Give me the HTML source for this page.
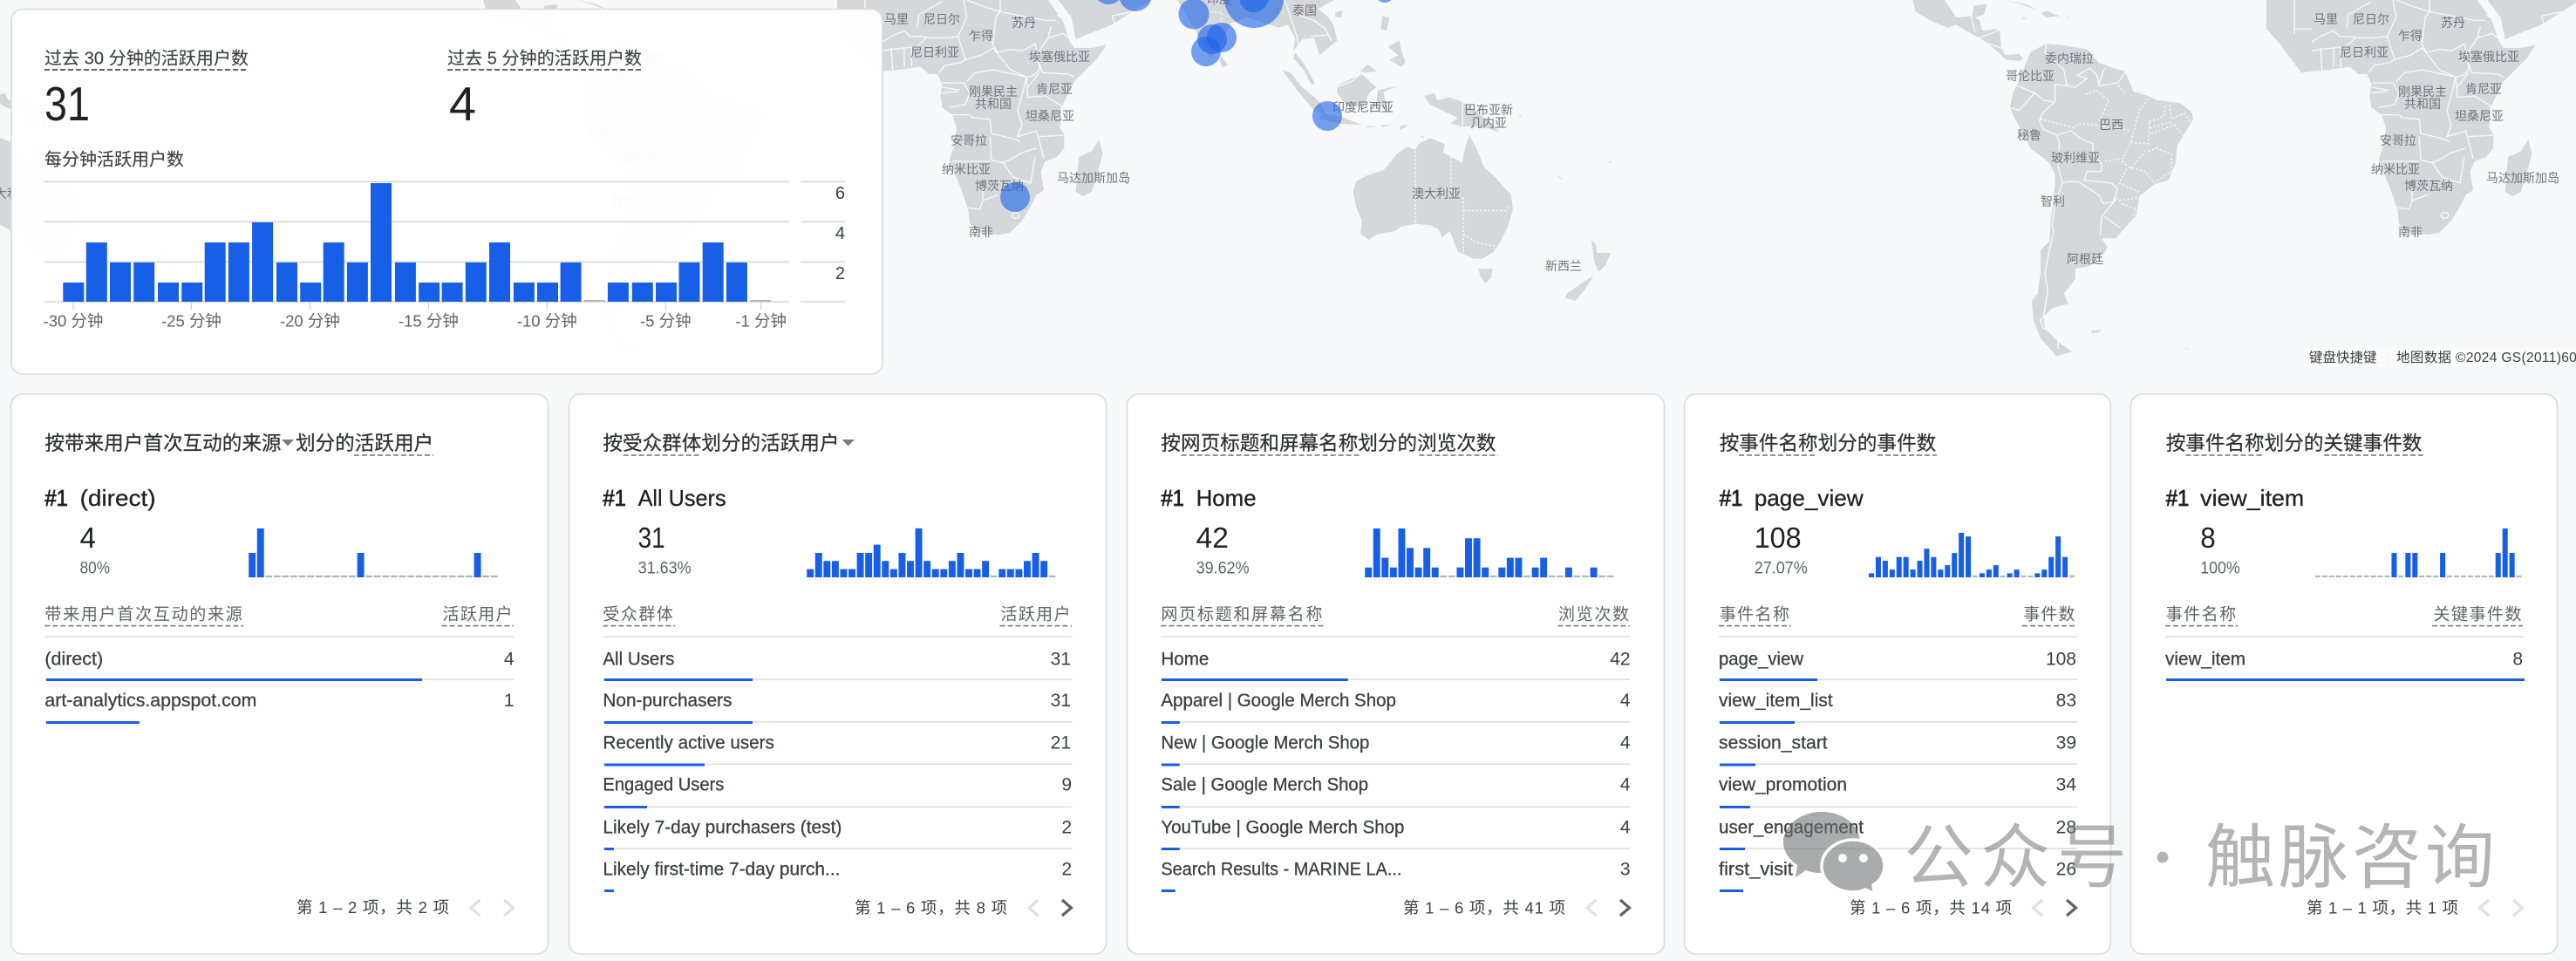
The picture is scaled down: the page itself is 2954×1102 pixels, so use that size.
<!DOCTYPE html>
<html lang="zh"><head><meta charset="utf-8"><title>实时概览</title>
<style>
html,body{margin:0;padding:0;background:#f7f8fa;width:2954px;height:1102px;overflow:hidden}
svg{display:block}
text{font-family:"Liberation Sans","Noto Sans CJK SC",sans-serif}
.m{font-size:14px;fill:#70747a;text-anchor:middle}
.f{font-size:15.5px;fill:#3c4043}
.tt{font-size:20px;fill:#3c4043;stroke:#3c4043;stroke-width:.15px}
.ax{font-size:18.5px;fill:#5f6368;text-anchor:middle}
.y{font-size:20px;fill:#3c4043;text-anchor:end}
.t{font-size:22.6px;fill:#303134;stroke:#303134;stroke-width:.25px}
.a{font-size:26px;fill:#202124;stroke:#202124;stroke-width:.3px}
.a1{stroke-width:.8px}
.b{font-size:33px;fill:#202124}
.p{font-size:19.5px;fill:#5f6368}
.h{font-size:19px;fill:#5f6368}
.he{font-size:19px;fill:#5f6368;text-anchor:end}
.r{font-size:21px;fill:#3c4043;stroke:#3c4043;stroke-width:.3px}
.n{font-size:21px;fill:#3c4043;text-anchor:end}
.g{font-size:18.5px;fill:#3c4043}
.wm{font-size:80px;fill:#777;opacity:.55}
.land{fill:#d5d7db}
.bd{fill:none;stroke:#f7f8fa;stroke-width:4;stroke-linejoin:round}
.dt{fill:none;stroke:#f7f8fa;stroke-width:4.5;stroke-dasharray:7 7}
.d{stroke:#80868b;stroke-width:1.7;stroke-dasharray:6 3;fill:none}
.l{stroke:#dadce0;stroke-width:1.5;fill:none}
.u{fill:#185fe8}
.z{stroke:#b4b7bb;stroke-width:2.2;fill:none}
.c0{fill:none;stroke:#dfe1e4;stroke-width:3.2}
.c1{fill:none;stroke:#5f6368;stroke-width:3.2}
.card{fill:#fff;stroke:#d9dbe0;stroke-width:1.6}
</style></head>
<body>
<svg xmlns="http://www.w3.org/2000/svg" width="2954" height="1102" viewBox="0 0 2954 1102">
<defs>
<g id="w">
<g transform="translate(1012 0) scale(.3333)">
<path class="land" d="M-156 0L-156 99L-111 150L-36 250L0 245L60 240L130 230L160 255L190 255L205 290L200 330L205 370L240 395L255 440L250 490L230 550L250 600L270 650L295 720L300 770L330 800L400 808L440 800L480 760L510 710L530 670L555 655L545 590L560 555L600 540L625 510L625 460L610 440L615 400L610 380L640 320L660 280L700 240L740 200L770 155L720 165L660 165L645 145L640 130L620 70L580 15L570 0Z"/>
<path class="land" d="M605 0L650 60L665 135L700 120L790 85L860 40L925 0Z"/>
<path class="land" d="M745 480L755 520L758 530L735 610L720 660L690 675L665 660L670 600L675 540L720 520Z"/>
<path class="bd" d="M0 145L30 125L75 105L95 125L130 125L160 130L220 130L260 125L290 60L280 0M120 95L125 50L205 5M260 125L285 205L270 215L215 225L195 250M375 145L395 180L440 170L480 175L510 160L525 150L535 190L540 240L520 260L495 265M285 205L340 190L380 165L400 190L440 240L495 265M380 150L390 60L405 40L405 0M290 0L340 20L405 40L560 70L595 70M580 90L570 130L530 190L550 250L640 255L660 265M290 280L320 250L380 240L495 265L485 310L465 380L480 430L465 470L530 450M240 395L300 395L310 405L370 410L375 460L400 465L460 480L475 490M370 470L375 550L410 560L440 550L480 525L530 510M240 555L370 555M415 560L450 610L510 630L525 540M345 630L345 690L400 670M295 715L335 720L345 690M540 470L625 465M530 450L555 545M495 265L500 335L560 330L625 370M540 250L500 300M230 370L285 360L300 320L280 285L205 285M205 300L265 310M205 320L260 315M30 165L35 240M75 165L75 230M100 165L100 230M0 175L30 170L120 160L150 130M-60 0L-60 120M-60 100L0 100M570 130L620 115L640 130M600 50L655 90M790 55L800 85M860 40L790 55"/>
<ellipse class="bd" cx="458" cy="741" rx="13" ry="10"/>
</g>
<g transform="translate(1330 0) scale(.3333)">
<path class="land" d="M60 0L120 100L175 200L210 150L245 80L300 60L410 95L440 85L465 130L460 175L490 135L530 130L550 190L610 140L600 90L580 60L545 30L600 0Z"/>
<path class="land" d="M210 190L235 225L215 232L208 210Z"/>
<path class="land" d="M465 180L500 225L535 290L520 290L495 240L460 200Z"/>
<path class="land" d="M420 240L450 250L490 300L550 350L575 400L530 380L480 320Z"/>
<path class="land" d="M555 390L620 400L695 430L620 425L550 410Z"/>
<path class="land" d="M610 295L660 270L695 255L745 300L720 320L700 370L640 360L610 320Z"/>
<path class="land" d="M690 245L715 220L745 245L710 250Z"/>
<path class="land" d="M750 310L825 295L770 315L775 350L790 385L745 355Z"/>
<path class="land" d="M765 55L790 60L780 105L760 100Z"/>
<path class="land" d="M790 205L820 190L785 160L825 140L830 170L845 215L830 230Z"/>
<path class="land" d="M603 42L630 35L625 60L605 58Z"/>
<path class="land" d="M715 432L745 436L712 438ZM760 430L800 430L765 438ZM830 432L855 430L825 448Z"/>
<path class="bd" d="M430 0L450 60L470 120L478 160M470 50L530 70L570 100L590 140M520 125L580 120M610 300L660 280L690 255"/>
<path class="dt" d="M175 40L215 45L210 80"/>
</g>
<g transform="translate(1480 80) scale(.3333)">
<path class="land" d="M430 275L400 265L365 290L345 315L320 345L260 365L225 385L215 420L225 470L245 520L240 565L270 585L300 565L360 555L380 540L430 530L480 535L510 550L520 578L548 555L575 625L630 650L660 650L700 625L725 585L745 545L765 480L758 430L730 400L705 370L665 335L640 270L615 225L600 270L590 320L525 285L530 255L480 235L440 255Z"/>
<path class="land" d="M645 685L695 685L690 715L670 735L655 715Z"/>
<path class="land" d="M1045 690L1040 710L1000 735L950 770L945 785L980 795L1010 760L1035 720Z"/>
<path class="land" d="M1035 585L1050 600L1055 630L1100 630L1085 670L1060 695L1045 660Z"/>
<path class="land" d="M460 90L495 80L505 105L545 95L590 110L620 130L680 175L720 215L660 195L590 195L550 185L575 165L480 120Z"/>
<path class="land" d="M915 358L940 382L925 372ZM1092 320L1106 322L1100 314ZM785 152L797 165L788 160ZM445 232L462 234L452 226Z"/>
<path class="bd" d="M592 105L592 195"/>
<path class="dt" d="M430 280L430 530M552 300L552 440L595 440L595 630M595 485L740 485L750 470M595 565L640 595L700 605L705 620"/>
</g>
<g transform="translate(541 0) scale(.3333)">
<path class="land" d="M40 0L50 40L100 70L160 95L190 85L240 115L270 130L300 150L340 185L360 205L410 210L420 200L405 185L360 190L345 165L340 110L330 100L280 105L270 70L255 60L285 50L295 15L250 20L245 55L190 60L150 0Z"/>
<path class="land" d="M360 0L430 15L470 35L420 18ZM480 45L500 38L545 55L500 60ZM415 58L435 65L420 65ZM570 58L582 60L575 64Z"/>
<path class="land" d="M500 150L445 180L425 230L400 290L385 320L375 370L390 405L420 460L445 510L510 560L530 600L530 640L515 760L510 830L480 860L480 940L470 1010L450 1035L455 1100L480 1165L535 1225L590 1210L545 1180L495 1130L490 1090L520 1060L575 1045L560 1010L600 960L600 925L650 915L700 870L710 850L690 820L740 820L760 795L810 740L820 675L870 635L920 620L945 560L950 500L975 460L1005 410L1000 385L960 355L880 345L850 330L800 315L770 245L735 235L680 215L640 170L550 155Z"/>
<path class="land" d="M655 1138L690 1135L680 1145L655 1147ZM970 1195L990 1205L985 1198Z"/>
<path class="bd" d="M500 150L495 180L560 240L570 295L530 290L530 350L490 385L475 415M570 295L600 300L640 270L605 260L650 235L675 260L680 290L700 235M680 295L745 285L775 245M400 295L460 320L490 345L525 350M460 320L405 380L375 370M475 415L490 445L535 465L585 450L615 475L660 495L660 530L690 565M535 465L545 490L540 570L555 630L575 625L610 625L680 670L695 700L730 695L745 650M690 565L690 590L640 590L630 620L680 625L725 630L745 650M745 680L690 745L685 810M700 745L755 785M555 630L530 700L520 770L525 800L510 860L495 940L505 1000L490 1090L480 1100L490 1130L540 1150L540 1200M240 55L255 110M270 130L335 105M300 150L345 165"/>
<path class="dt" d="M480 410L520 420L590 440L620 425L665 430L790 450M635 325L670 310L715 345L690 400L680 420M770 320L745 290M850 340L820 380L790 490L765 545L700 555M790 490L850 495L855 430L850 420L905 400L910 360M855 440L930 420M850 520L880 510L930 530L930 590L870 630L840 590L780 575L750 630L820 660M760 555L790 580L840 520M750 690L820 680M760 700L810 720L800 740M860 460L940 430L970 465M925 360L930 410L975 390L995 420"/>
</g>
</g>
</defs>

<rect width="2954" height="1102" fill="#f7f8fa"/>
<use href="#w"/>
<use href="#w" transform="translate(1639 0)"/>
<use href="#w" transform="translate(-1639 0)"/>

<!-- map labels copy 1 -->
<g class="labels">
<text class="m" x="1028" y="27">马里</text><text class="m" x="1080" y="27">尼日尔</text><text class="m" x="1174" y="31">苏丹</text><text class="m" x="1125" y="46">乍得</text><text class="m" x="1072" y="65">尼日利亚</text><text class="m" x="1215" y="70">埃塞俄比亚</text><text class="m" x="1139" y="110">刚果民主</text><text class="m" x="1139" y="124">共和国</text><text class="m" x="1209" y="107">肯尼亚</text><text class="m" x="1204" y="138">坦桑尼亚</text><text class="m" x="1111" y="166">安哥拉</text><text class="m" x="1108" y="199">纳米比亚</text><text class="m" x="1146" y="218">博茨瓦纳</text><text class="m" x="1254" y="209">马达加斯加岛</text><text class="m" x="1125" y="271">南非</text>
<text class="m" x="1398" y="4">印度</text><text class="m" x="1496" y="17">泰国</text><text class="m" x="1563" y="128">印度尼西亚</text>
<text class="m" x="1647" y="227">澳大利亚</text><text class="m" x="1707" y="131">巴布亚新</text><text class="m" x="1707" y="146">几内亚</text><text class="m" x="1793" y="310">新西兰</text>
<text class="m" x="734" y="72">委内瑞拉</text><text class="m" x="689" y="92">哥伦比亚</text><text class="m" x="782" y="148">巴西</text><text class="m" x="688" y="160">秘鲁</text><text class="m" x="741" y="186">玻利维亚</text><text class="m" x="715" y="236">智利</text><text class="m" x="752" y="302">阿根廷</text>
<text class="m" x="8" y="227">澳大利亚</text><text class="m" x="68" y="131">巴布亚新</text><text class="m" x="68" y="146">几内亚</text>
</g>
<!-- map labels copy 2 -->
<g class="labels">
<text class="m" x="2373" y="72">委内瑞拉</text><text class="m" x="2328" y="92">哥伦比亚</text><text class="m" x="2421" y="148">巴西</text><text class="m" x="2327" y="160">秘鲁</text><text class="m" x="2380" y="186">玻利维亚</text><text class="m" x="2354" y="236">智利</text><text class="m" x="2391" y="302">阿根廷</text>
<text class="m" x="2667" y="27">马里</text><text class="m" x="2719" y="27">尼日尔</text><text class="m" x="2813" y="31">苏丹</text><text class="m" x="2764" y="46">乍得</text><text class="m" x="2711" y="65">尼日利亚</text><text class="m" x="2854" y="70">埃塞俄比亚</text><text class="m" x="2778" y="110">刚果民主</text><text class="m" x="2778" y="124">共和国</text><text class="m" x="2848" y="107">肯尼亚</text><text class="m" x="2843" y="138">坦桑尼亚</text><text class="m" x="2750" y="166">安哥拉</text><text class="m" x="2747" y="199">纳米比亚</text><text class="m" x="2785" y="218">博茨瓦纳</text><text class="m" x="2893" y="209">马达加斯加岛</text><text class="m" x="2764" y="271">南非</text>
</g>

<!-- map circles -->
<g fill="#1a62e8" fill-opacity=".6">
<circle cx="1164" cy="226" r="17"/><circle cx="1271" cy="-12" r="17"/><circle cx="1302" cy="-6" r="19"/>
<circle cx="1369" cy="16" r="17.5"/><circle cx="1438" cy="-2" r="34"/><circle cx="1438" cy="-3" r="17"/>
<circle cx="1401" cy="43" r="17"/><circle cx="1390" cy="45" r="17"/><circle cx="1383" cy="59" r="17"/>
<circle cx="1522" cy="133" r="17"/><circle cx="1588" cy="-8" r="11"/>
</g>

<!-- map footer -->
<rect x="2641" y="398" width="97" height="22" fill="#fff" fill-opacity=".45"/>
<rect x="2741" y="398" width="213" height="22" fill="#fff" fill-opacity=".45"/>
<text class="f" x="2648" y="415">键盘快捷键</text>
<text class="f" x="2748" y="415" letter-spacing=".35">地图数据 ©2024 GS(2011)6020号</text>

<!-- realtime card -->
<rect x="13" y="10.5" width="999" height="418.5" rx="13" fill="#fff" fill-opacity=".965" stroke="#d9dbe0" stroke-width="1.6"/>
<text class="tt" x="51" y="73.6" textLength="234">过去 30 分钟的活跃用户数</text>
<path class="d" style="stroke:#5f6368;stroke-width:2" d="M51 80H285"/>
<text class="tt" x="513" y="73.6" textLength="223">过去 5 分钟的活跃用户数</text>
<path class="d" style="stroke:#5f6368;stroke-width:2" d="M513 80H736"/>
<text x="51" y="138" font-size="55" fill="#202124" textLength="52" lengthAdjust="spacingAndGlyphs">31</text>
<text x="515" y="138" font-size="55" fill="#202124" textLength="31" lengthAdjust="spacingAndGlyphs">4</text>
<text class="tt" x="51" y="189.6">每分钟活跃用户数</text>
<path stroke="#d5d7db" stroke-width="1.6" fill="none" d="M51 208.3H905M918.4 208.3H969.5M51 254.3H905M918.4 254.3H969.5M51 300.3H905M918.4 300.3H969.5M51 346H905M918.4 346H969.5"/>
<path stroke="#cfd2d6" stroke-width="1.2" fill="none" d="M84 346V355M219.5 346V355M355.4 346V355M491.4 346V355M627.3 346V355M763.3 346V355M872.7 346V355"/>
<path class="u" d="M72.3 324h24v22h-24zM98.8 278h24v68h-24zM126 301h24v45h-24zM153.2 301h24v45h-24zM181 324h24v22h-24zM208.2 324h24v22h-24zM234.7 278h24v68h-24zM261.9 278h24v68h-24zM289.1 255h24v91h-24zM317 301h24v45h-24zM344.2 324h24v22h-24zM370.7 278h24v68h-24zM397.9 301h24v45h-24zM425 210h24v136h-24zM452.9 301h24v45h-24zM480.1 324h24v22h-24zM506.6 324h24v22h-24zM533.8 301h24v45h-24zM561 278h24v68h-24zM588.9 324h24v22h-24zM616 324h24v22h-24zM642.6 301h24v45h-24zM696.9 324h24v22h-24zM724.8 324h24v22h-24zM752 324h24v22h-24zM778.5 301h24v45h-24zM805.7 278h24v68h-24zM832.9 301h24v45h-24z"/>
<path fill="#b4b7bb" d="M669.8 344h24v2h-24zM860.1 344h24v2h-24z"/>
<text class="y" x="969" y="228">6</text><text class="y" x="969" y="274">4</text><text class="y" x="969" y="320">2</text>
<text class="ax" x="84" y="374.7">-30 分钟</text><text class="ax" x="219.5" y="374.7">-25 分钟</text><text class="ax" x="355.4" y="374.7">-20 分钟</text><text class="ax" x="491.4" y="374.7">-15 分钟</text><text class="ax" x="627.3" y="374.7">-10 分钟</text><text class="ax" x="763.3" y="374.7">-5 分钟</text><text class="ax" x="872.7" y="374.7">-1 分钟</text>

<!-- CARD 1 -->
<rect class="card" x="12.5" y="452" width="616" height="642" rx="13"/>
<text class="t" x="51.4" y="516">按带来用户首次互动的来源</text>
<path fill="#7a7c80" d="M323 504H337L330 511.5Z"/>
<text class="t" x="339" y="516">划分的活跃用户</text>
<path class="d" d="M406 522H497"/>
<text class="a a1" x="51.4" y="580" textLength="26.5" lengthAdjust="spacingAndGlyphs">#1</text>
<text class="a" x="91.6" y="580" textLength="87" lengthAdjust="spacingAndGlyphs">(direct)</text>
<text class="b" x="91.6" y="628">4</text>
<text class="p" x="91.6" y="657.3" textLength="34.4" lengthAdjust="spacingAndGlyphs">80%</text>
<path class="z" stroke-dasharray="7.9 1.67" d="M285.2 661H572"/>
<g class="u" transform="translate(285.2 662) scale(9.57 -28)"><path d="M0 0h.83v1h-.83zM1 0h.83v2h-.83zM13 0h.83v1h-.83zM27 0h.83v1h-.83z"/></g>
<text class="h" x="51.4" y="710.5" textLength="226.4">带来用户首次互动的来源</text>
<path class="d" d="M51.4 717.6H279"/>
<text class="he" x="587.5" y="710.5" textLength="80">活跃用户</text>
<path class="d" d="M506.5 717.6H589"/>
<path class="l" d="M51.4 730.3H589.6M51.4 779.2H589.6"/>
<text class="r" x="51.4" y="762.3" textLength="66.7" lengthAdjust="spacingAndGlyphs">(direct)</text><text class="n" x="589.6" y="762.3">4</text>
<rect class="u" x="53" y="778" width="431" height="3"/>
<text class="r" x="51.4" y="810" textLength="243" lengthAdjust="spacingAndGlyphs">art-analytics.appspot.com</text><text class="n" x="589.6" y="810">1</text>
<rect class="u" x="53" y="827" width="107" height="3"/>
<text class="g" x="340" y="1047" textLength="175">第 1 – 2 项，共 2 项</text>
<path class="c0" d="M550.5 1032L540 1041L550.5 1050M578 1032L588.5 1041L578 1050"/>

<!-- CARD 2 -->
<rect class="card" x="652.5" y="452" width="616" height="642" rx="13"/>
<text class="t" x="691.4" y="516">按受众群体划分的活跃用户</text>
<path fill="#7a7c80" d="M965.5 504H980L972.7 511.5Z"/>
<path class="d" d="M714.6 522H804.6"/>
<text class="a a1" x="691.4" y="580" textLength="26.5" lengthAdjust="spacingAndGlyphs">#1</text>
<text class="a" x="731.6" y="580" textLength="101" lengthAdjust="spacingAndGlyphs">All Users</text>
<text class="b" x="731.6" y="628" textLength="31" lengthAdjust="spacingAndGlyphs">31</text>
<text class="p" x="731.6" y="657.3" textLength="61" lengthAdjust="spacingAndGlyphs">31.63%</text>
<path class="z" stroke-dasharray="7.9 1.67" d="M925.2 661H1212"/>
<g class="u" transform="translate(925.2 662) scale(9.57 -9.35)"><path d="M0 0h.83v1h-.83zM1 0h.83v3h-.83zM2 0h.83v2h-.83zM3 0h.83v2h-.83zM4 0h.83v1h-.83zM5 0h.83v1h-.83zM6 0h.83v3h-.83zM7 0h.83v3h-.83zM8 0h.83v4h-.83zM9 0h.83v2h-.83zM10 0h.83v1h-.83zM11 0h.83v3h-.83zM12 0h.83v2h-.83zM13 0h.83v6h-.83zM14 0h.83v2h-.83zM15 0h.83v1h-.83zM16 0h.83v1h-.83zM17 0h.83v2h-.83zM18 0h.83v3h-.83zM19 0h.83v1h-.83zM20 0h.83v1h-.83zM21 0h.83v2h-.83zM23 0h.83v1h-.83zM24 0h.83v1h-.83zM25 0h.83v1h-.83zM26 0h.83v2h-.83zM27 0h.83v3h-.83zM28 0h.83v2h-.83z"/></g>
<text class="h" x="691.4" y="710.5" textLength="80.5">受众群体</text>
<path class="d" d="M691.4 717.6H774"/>
<text class="he" x="1227.5" y="710.5" textLength="80">活跃用户</text>
<path class="d" d="M1146.5 717.6H1229"/>
<path class="l" d="M691.4 730.3H1229.6M691.4 779.2H1229.6M691.4 828H1229.6M691.4 876.3H1229.6M691.4 925.2H1229.6M691.4 973H1229.6"/>
<text class="r" x="691.4" y="762.3" textLength="82" lengthAdjust="spacingAndGlyphs">All Users</text><text class="n" x="1228" y="762.3">31</text>
<text class="r" x="691.4" y="810" textLength="148" lengthAdjust="spacingAndGlyphs">Non-purchasers</text><text class="n" x="1228" y="810">31</text>
<text class="r" x="691.4" y="858.4" textLength="196.5" lengthAdjust="spacingAndGlyphs">Recently active users</text><text class="n" x="1228" y="858.4">21</text>
<text class="r" x="691.4" y="906.5" textLength="139" lengthAdjust="spacingAndGlyphs">Engaged Users</text><text class="n" x="1229" y="906.5">9</text>
<text class="r" x="691.4" y="955.4" textLength="274" lengthAdjust="spacingAndGlyphs">Likely 7-day purchasers (test)</text><text class="n" x="1229" y="955.4">2</text>
<text class="r" x="691.4" y="1003.5" textLength="272" lengthAdjust="spacingAndGlyphs">Likely first-time 7-day purch...</text><text class="n" x="1229" y="1003.5">2</text>
<path class="u" d="M693 778h170v3h-170zM693 827h170v3h-170zM693 875.5h115v3h-115zM693 924h49v3h-49zM693 972h11v3h-11zM693 1020h11v3h-11z"/>
<text class="g" x="980" y="1047.5" textLength="175">第 1 – 6 项，共 8 项</text>
<path class="c0" d="M1190.5 1032L1180 1041L1190.5 1050"/><path class="c1" d="M1218 1032L1228.5 1041L1218 1050"/>

<!-- CARD 3 -->
<rect class="card" x="1292.5" y="452" width="616" height="642" rx="13"/>
<text class="t" x="1331.4" y="516">按网页标题和屏幕名称划分的浏览次数</text>
<path class="d" d="M1354.6 522H1558.6M1627.4 522H1718"/>
<text class="a a1" x="1331.4" y="580" textLength="26.5" lengthAdjust="spacingAndGlyphs">#1</text>
<text class="a" x="1371.6" y="580" textLength="69" lengthAdjust="spacingAndGlyphs">Home</text>
<text class="b" x="1371.6" y="628" textLength="37.3" lengthAdjust="spacingAndGlyphs">42</text>
<text class="p" x="1371.6" y="657.3" textLength="61" lengthAdjust="spacingAndGlyphs">39.62%</text>
<path class="z" stroke-dasharray="7.9 1.67" d="M1565.2 661H1852"/>
<g class="u" transform="translate(1565.2 662) scale(9.57 -11.2)"><path d="M0 0h.83v1h-.83zM1 0h.83v5h-.83zM2 0h.83v2h-.83zM3 0h.83v1h-.83zM4 0h.83v5h-.83zM5 0h.83v3h-.83zM6 0h.83v1h-.83zM7 0h.83v3h-.83zM8 0h.83v1h-.83zM11 0h.83v1h-.83zM12 0h.83v4h-.83zM13 0h.83v4h-.83zM14 0h.83v1h-.83zM16 0h.83v1h-.83zM17 0h.83v2h-.83zM18 0h.83v2h-.83zM20 0h.83v1h-.83zM21 0h.83v2h-.83zM24 0h.83v1h-.83zM27 0h.83v1h-.83z"/></g>
<text class="h" x="1331.4" y="710.5" textLength="185">网页标题和屏幕名称</text>
<path class="d" d="M1331.4 717.6H1518"/>
<text class="he" x="1868" y="710.5" textLength="81">浏览次数</text>
<path class="d" d="M1786.5 717.6H1869"/>
<path class="l" d="M1331.4 730.3H1869.6M1331.4 779.2H1869.6M1331.4 828H1869.6M1331.4 876.3H1869.6M1331.4 925.2H1869.6M1331.4 973H1869.6"/>
<text class="r" x="1331.4" y="762.3" textLength="55" lengthAdjust="spacingAndGlyphs">Home</text><text class="n" x="1869.6" y="762.3">42</text>
<text class="r" x="1331.4" y="810" textLength="269.5" lengthAdjust="spacingAndGlyphs">Apparel | Google Merch Shop</text><text class="n" x="1869.6" y="810">4</text>
<text class="r" x="1331.4" y="858.4" textLength="239" lengthAdjust="spacingAndGlyphs">New | Google Merch Shop</text><text class="n" x="1869.6" y="858.4">4</text>
<text class="r" x="1331.4" y="906.5" textLength="237.6" lengthAdjust="spacingAndGlyphs">Sale | Google Merch Shop</text><text class="n" x="1869.6" y="906.5">4</text>
<text class="r" x="1331.4" y="955.4" textLength="279" lengthAdjust="spacingAndGlyphs">YouTube | Google Merch Shop</text><text class="n" x="1869.6" y="955.4">4</text>
<text class="r" x="1331.4" y="1003.5" textLength="276" lengthAdjust="spacingAndGlyphs">Search Results - MARINE LA...</text><text class="n" x="1869.6" y="1003.5">3</text>
<path class="u" d="M1331.8 778h214v3h-214zM1331.8 827h21v3h-21zM1331.8 875.5h21v3h-21zM1331.8 924h21v3h-21zM1331.8 972h21v3h-21zM1331.8 1020h16v3h-16z"/>
<text class="g" x="1609" y="1047.5" textLength="186">第 1 – 6 项，共 41 项</text>
<path class="c0" d="M1830.5 1032L1820 1041L1830.5 1050"/><path class="c1" d="M1858 1032L1868.5 1041L1858 1050"/>

<!-- CARD 4 -->
<rect class="card" x="1931.5" y="452" width="489" height="642" rx="13"/>
<text class="t" x="1971.7" y="516">按事件名称划分的事件数</text>
<path class="d" d="M1994 522H2084M2153 522H2221"/>
<text class="a a1" x="1971.7" y="580" textLength="26.7" lengthAdjust="spacingAndGlyphs">#1</text>
<text class="a" x="2011.7" y="580" textLength="125" lengthAdjust="spacingAndGlyphs">page_view</text>
<text class="b" x="2011.7" y="628" textLength="54" lengthAdjust="spacingAndGlyphs">108</text>
<text class="p" x="2011.7" y="657.3" textLength="61" lengthAdjust="spacingAndGlyphs">27.07%</text>
<path class="z" stroke-dasharray="6 1.93" d="M2143 661H2381"/>
<g class="u" transform="translate(2143 662) scale(7.93 -.4219)"><path d="M0 0h.76v11h-.76zM1 0h.76v55h-.76zM2 0h.76v45h-.76zM3 0h.76v21h-.76zM4 0h.76v55h-.76zM5 0h.76v55h-.76zM6 0h.76v21h-.76zM7 0h.76v45h-.76zM8 0h.76v78h-.76zM9 0h.76v55h-.76zM10 0h.76v21h-.76zM11 0h.76v33h-.76zM12 0h.76v66h-.76zM13 0h.76v121h-.76zM14 0h.76v111h-.76zM16 0h.76v11h-.76zM17 0h.76v21h-.76zM18 0h.76v33h-.76zM20 0h.76v11h-.76zM21 0h.76v21h-.76zM24 0h.76v11h-.76zM25 0h.76v21h-.76zM26 0h.76v55h-.76zM27 0h.76v111h-.76zM28 0h.76v55h-.76z"/></g>
<text class="h" x="1971.7" y="710.5" textLength="80.3">事件名称</text>
<path class="d" d="M1971 717.6H2054"/>
<text class="he" x="2379.5" y="710.5" textLength="59.3">事件数</text>
<path class="d" d="M2319 717.6H2381"/>
<path class="l" d="M1971 730.3H2382M1971 779.2H2382M1971 828H2382M1971 876.3H2382M1971 925.2H2382M1971 973H2382"/>
<text class="r" x="1971" y="762.3" textLength="97" lengthAdjust="spacingAndGlyphs">page_view</text><text class="n" x="2381" y="762.3">108</text>
<text class="r" x="1971" y="810" textLength="130.7" lengthAdjust="spacingAndGlyphs">view_item_list</text><text class="n" x="2381" y="810">83</text>
<text class="r" x="1971" y="858.4" textLength="124.7" lengthAdjust="spacingAndGlyphs">session_start</text><text class="n" x="2381" y="858.4">39</text>
<text class="r" x="1971" y="906.5" textLength="147" lengthAdjust="spacingAndGlyphs">view_promotion</text><text class="n" x="2381" y="906.5">34</text>
<text class="r" x="1971" y="955.4" textLength="166" lengthAdjust="spacingAndGlyphs">user_engagement</text><text class="n" x="2381" y="955.4">28</text>
<text class="r" x="1971" y="1003.5" textLength="85" lengthAdjust="spacingAndGlyphs">first_visit</text><text class="n" x="2381" y="1003.5">26</text>
<path class="u" d="M1972 778h112v3h-112zM1972 827h86v3h-86zM1972 875.5h41v3h-41zM1972 924h35v3h-35zM1972 972h29v3h-29zM1972 1020h27v3h-27z"/>
<text class="g" x="2121" y="1047.5" textLength="186">第 1 – 6 项，共 14 项</text>
<path class="c0" d="M2342 1032L2331.5 1041L2342 1050"/><path class="c1" d="M2370 1032L2380.5 1041L2370 1050"/>

<!-- CARD 5 -->
<rect class="card" x="2443.5" y="452" width="489" height="642" rx="13"/>
<text class="t" x="2483.7" y="516">按事件名称划分的关键事件数</text>
<path class="d" d="M2506.5 522H2596M2665 522H2779"/>
<text class="a a1" x="2483.7" y="580" textLength="26.7" lengthAdjust="spacingAndGlyphs">#1</text>
<text class="a" x="2523.2" y="580" textLength="119" lengthAdjust="spacingAndGlyphs">view_item</text>
<text class="b" x="2523.2" y="628" textLength="17.5" lengthAdjust="spacingAndGlyphs">8</text>
<text class="p" x="2523.2" y="657.3" textLength="45.6" lengthAdjust="spacingAndGlyphs">100%</text>
<path class="z" stroke-dasharray="6 1.95" d="M2655 661H2893.4"/>
<g class="u" transform="translate(2655 662) scale(7.95 -28)"><path d="M11 0h.76v1h-.76zM13 0h.76v1h-.76zM14 0h.76v1h-.76zM18 0h.76v1h-.76zM26 0h.76v1h-.76zM27 0h.76v2h-.76zM28 0h.76v1h-.76z"/></g>
<text class="h" x="2483.7" y="710.5" textLength="80.4">事件名称</text>
<path class="d" d="M2483 717.6H2566"/>
<text class="he" x="2891.5" y="710.5" textLength="101">关键事件数</text>
<path class="d" d="M2789 717.6H2893"/>
<path class="l" d="M2483 730.3H2894"/>
<text class="r" x="2483" y="762.3" textLength="92" lengthAdjust="spacingAndGlyphs">view_item</text><text class="n" x="2893" y="762.3">8</text>
<rect class="u" x="2484" y="778" width="411" height="3"/>
<text class="g" x="2645" y="1047.5" textLength="174">第 1 – 1 项，共 1 项</text>
<path class="c0" d="M2854 1032L2843.5 1041L2854 1050M2882 1032L2892.5 1041L2882 1050"/>

<!-- watermark -->
<g opacity=".58">
<path fill="#6e7072" d="M2089 931C2113 931 2133 946 2133 966C2133 986 2113 1001 2089 1001C2082 1001 2076 1000 2071 998L2059 1006L2061 992C2051 985 2045 976 2045 966C2045 946 2065 931 2089 931Z"/>
<path fill="#6e7072" stroke="#fff" stroke-width="3.5" d="M2125 963C2145 963 2161 977 2161 993C2161 1002 2156 1010 2148 1015L2150 1025L2139 1020C2135 1022 2130 1023 2125 1023C2105 1023 2089 1010 2089 993C2089 977 2105 963 2125 963Z"/>
<circle cx="2113" cy="984" r="5" fill="#fff"/><circle cx="2137" cy="984" r="5" fill="#fff"/>
</g>
<text class="wm" x="2183" y="1011" textLength="256">公众号</text>
<circle cx="2480" cy="983" r="6.5" fill="#777" opacity=".55"/>
<text class="wm" x="2529" y="1011" textLength="332">触脉咨询</text>
</svg>
</body></html>
